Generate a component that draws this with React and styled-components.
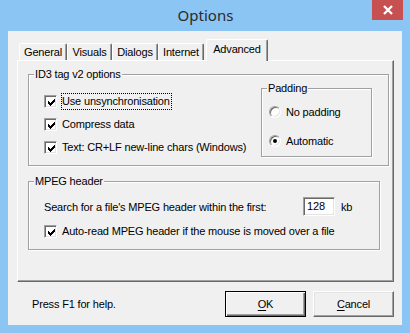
import React from 'react'
import styled, { createGlobalStyle } from 'styled-components'

const GlobalStyle = createGlobalStyle`
  html, body {
    margin: 0;
    padding: 0;
    background: #8ac5f4;
  }
  body {
    font-family: "Liberation Sans", Arial, sans-serif;
    font-size: 11px;
    letter-spacing: -0.17px;
    color: #000;
  }
`

const Frame = styled.div`
  width: 410px;
  height: 333px;
  box-sizing: border-box;
  background: #8ac5f4;
  padding: 0 8px 8px 8px;
  display: flex;
  flex-direction: column;
`

const TitleBar = styled.div`
  height: 31px;
  flex-shrink: 0;
  display: grid;
  grid-template-columns: 1fr auto 1fr;
  align-items: start;
  margin-right: -1px;
`

const Title = styled.div`
  grid-column: 2;
  font-family: "Noto Sans", "Open Sans", sans-serif;
  font-size: 15px;
  letter-spacing: 0;
  line-height: 30px;
  color: #2b2b2b;
`

const CloseButton = styled.div`
  grid-column: 3;
  justify-self: end;
  width: 31px;
  height: 20px;
  background: #c75050;
  display: flex;
  align-items: center;
  justify-content: center;
`

const Client = styled.div`
  flex: 1;
  background: #f0f0f0;
  display: flex;
  flex-direction: column;
  padding: 8px 8px 0 9px;
`

const TabStrip = styled.div`
  height: 21px;
  display: flex;
  align-items: flex-end;
  padding-left: 2px;
  position: relative;
  z-index: 1;
`

const Tab = styled.div`
  box-sizing: border-box;
  width: ${p => p.$w}px;
  height: ${p => (p.$active ? 22 : 17)}px;
  margin-left: ${p => p.$ml || 0}px;
  margin-bottom: ${p => (p.$active ? -1 : 0)}px;
  border: 1px solid;
  border-bottom: none;
  border-color: #fff #696969 transparent #fff;
  border-radius: 2px 2px 0 0;
  box-shadow: inset -1px 0 0 #a0a0a0;
  background: #f0f0f0;
  text-align: center;
  white-space: nowrap;
  line-height: ${p => (p.$active ? 17 : 16)}px;
  padding-top: ${p => (p.$active ? 1 : 0)}px;
`

const Panel = styled.div`
  height: 222px;
  box-sizing: border-box;
  border: 1px solid;
  border-color: #fff #696969 #696969 #fff;
  box-shadow: inset -1px -1px 0 #a0a0a0;
  padding: 13px 0 0 10px;
  display: flex;
  flex-direction: column;
`

const Group = styled.div`
  position: relative;
  box-sizing: border-box;
  width: ${p => p.$w}px;
  height: ${p => p.$h}px;
  margin-top: ${p => p.$mt || 0}px;
  flex-shrink: 0;
  border: 1px solid #a0a0a0;
  box-shadow: inset 1px 1px 0 #fff, 1px 1px 0 #fff;
  display: flex;
`

const GroupLabel = styled.span`
  position: absolute;
  top: -8px;
  left: 5px;
  padding: 0 1px;
  background: #f0f0f0;
  line-height: 15px;
`

const CheckList = styled.div`
  display: flex;
  flex-direction: column;
  padding: 15px 0 0 15px;
`

const Row = styled.div`
  height: ${p => p.$h || 23}px;
  margin-top: ${p => p.$mt || 0}px;
  display: flex;
  align-items: center;
`

const Box = styled.span`
  width: 13px;
  height: 13px;
  box-sizing: border-box;
  flex-shrink: 0;
  border: 1px solid;
  border-color: #a0a0a0 #fff #fff #a0a0a0;
  box-shadow: inset 1px 1px 0 #696969, inset -1px -1px 0 #e3e3e3;
  background: #fff;
  display: flex;
  align-items: center;
  justify-content: center;
  padding: 1px 0 0 1px;
`

const Label = styled.span`
  margin-left: 4px;
  line-height: 15px;
  padding-right: 1px;
  border: 1px dotted ${p => (p.$focus ? '#000' : 'transparent')};
  white-space: nowrap;
`

const RadioList = styled.div`
  display: flex;
  flex-direction: column;
  padding: 8px 0 0 7px;
`

const RadioDot = styled.span`
  width: 12px;
  height: 12px;
  box-sizing: border-box;
  flex-shrink: 0;
  border-radius: 50%;
  border: 1px solid;
  border-color: #a0a0a0 #fff #fff #a0a0a0;
  box-shadow: inset 1px 1px 0 #696969, inset -1px -1px 0 #e3e3e3;
  background: #fff;
  display: flex;
  align-items: center;
  justify-content: center;

  &::after {
    content: '';
    width: 4px;
    height: 4px;
    border-radius: 50%;
    background: ${p => (p.$on ? '#000' : 'transparent')};
  }
`

const RadioText = styled.span`
  margin-left: 5px;
  white-space: nowrap;
`

const PaddingGroup = styled(Group)`
  margin: 13px 16px 0 auto;
  flex-direction: column;
`

const MpegBody = styled.div`
  display: flex;
  flex-direction: column;
  padding: 15px 0 0 15px;
`

const SearchText = styled.span`
  width: 259px;
  white-space: nowrap;
`

const NumberBox = styled.div`
  width: 32px;
  height: 19px;
  box-sizing: border-box;
  border: 1px solid;
  border-color: #a0a0a0 #fff #fff #a0a0a0;
  box-shadow: inset 1px 1px 0 #696969, inset -1px -1px 0 #e3e3e3;
  background: #fff;
  padding-left: 3px;
  line-height: 17px;
`

const Unit = styled.span`
  margin-left: 6px;
`

const Footer = styled.div`
  margin-top: 9px;
  height: 26px;
  display: flex;
  align-items: center;
  padding-left: 15px;
`

const HelpText = styled.span`
  flex: 1;
`

const Button = styled.div`
  width: 81px;
  height: 26px;
  box-sizing: border-box;
  margin-left: ${p => p.$ml || 0}px;
  display: flex;
  align-items: center;
  justify-content: center;
  background: #f0f0f0;
  border: 1px solid;
  border-color: ${p => (p.$default ? '#000' : '#fff #696969 #696969 #fff')};
  box-shadow: ${p =>
    p.$default
      ? 'inset 1px 1px 0 #fff, inset -1px -1px 0 #696969, inset -2px -2px 0 #a0a0a0'
      : 'inset -1px -1px 0 #a0a0a0, inset 1px 1px 0 #e3e3e3'};

  u {
    text-decoration: underline;
    text-underline-offset: 2px;
  }
`

const CheckMark = () => (
  <svg width="7" height="7" viewBox="0 0 7 7" shapeRendering="crispEdges">
    <rect x="0" y="2" width="1" height="3" fill="#000" />
    <rect x="1" y="3" width="1" height="3" fill="#000" />
    <rect x="2" y="4" width="1" height="3" fill="#000" />
    <rect x="3" y="3" width="1" height="3" fill="#000" />
    <rect x="4" y="2" width="1" height="3" fill="#000" />
    <rect x="5" y="1" width="1" height="3" fill="#000" />
    <rect x="6" y="0" width="1" height="3" fill="#000" />
  </svg>
)

const Check = ({ label, focus, mt }) => (
  <Row $mt={mt}>
    <Box>
      <CheckMark />
    </Box>
    <Label $focus={focus}>{label}</Label>
  </Row>
)

const Radio = ({ label, on }) => (
  <Row $h={29}>
    <RadioDot $on={on} />
    <RadioText>{label}</RadioText>
  </Row>
)

const tabs = [
  { name: 'General', w: 48 },
  { name: 'Visuals', w: 45 },
  { name: 'Dialogs', w: 46 },
  { name: 'Internet', w: 46 },
  { name: 'Advanced', w: 62, active: true, ml: 2 },
]

export default function App() {
  return (
    <>
      <GlobalStyle />
      <Frame>
        <TitleBar>
          <Title>Options</Title>
          <CloseButton>
            <svg width="10" height="10" viewBox="0 0 10 10">
              <path d="M1 1 L9 9 M9 1 L1 9" stroke="#fff" strokeWidth="2.3" />
            </svg>
          </CloseButton>
        </TitleBar>
        <Client>
          <TabStrip>
            {tabs.map(t => (
              <Tab key={t.name} $w={t.w} $active={t.active} $ml={t.ml}>
                {t.name}
              </Tab>
            ))}
          </TabStrip>
          <Panel>
            <Group $w={361} $h={92}>
              <GroupLabel>ID3 tag v2 options</GroupLabel>
              <CheckList>
                <Check label="Use unsynchronisation" focus />
                <Check label="Compress data" />
                <Check label="Text: CR+LF new-line chars (Windows)" />
              </CheckList>
              <PaddingGroup $w={111} $h={69}>
                <GroupLabel>Padding</GroupLabel>
                <RadioList>
                  <Radio label="No padding" />
                  <Radio label="Automatic" on />
                </RadioList>
              </PaddingGroup>
            </Group>
            <Group $w={352} $h={69} $mt={15}>
              <GroupLabel>MPEG header</GroupLabel>
              <MpegBody>
                <Row $h={19}>
                  <SearchText>Search for a file's MPEG header within the first:</SearchText>
                  <NumberBox>128</NumberBox>
                  <Unit>kb</Unit>
                </Row>
                <Check label="Auto-read MPEG header if the mouse is moved over a file" mt={4} />
              </MpegBody>
            </Group>
          </Panel>
          <Footer>
            <HelpText>Press F1 for help.</HelpText>
            <Button $default>
              <span><u>O</u>K</span>
            </Button>
            <Button $ml={7}>
              <span><u>C</u>ancel</span>
            </Button>
          </Footer>
        </Client>
      </Frame>
    </>
  )
}
